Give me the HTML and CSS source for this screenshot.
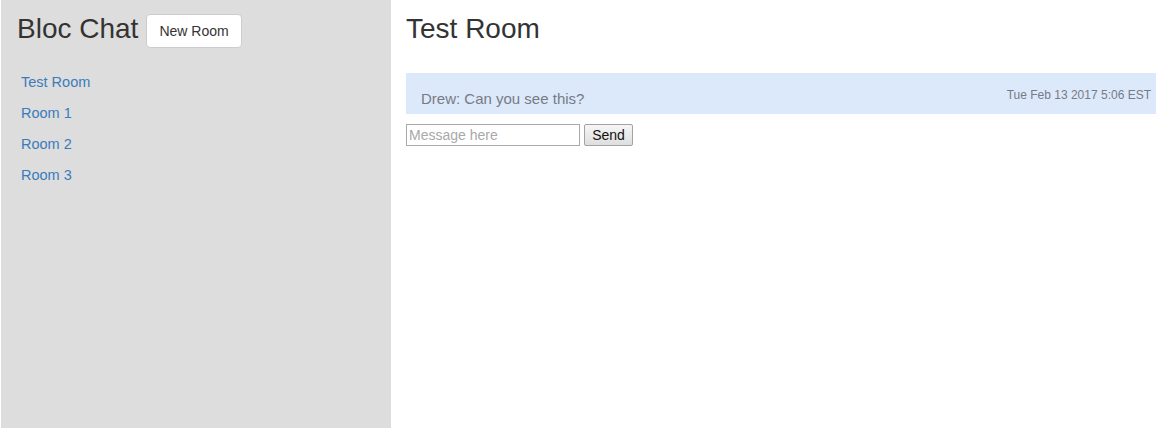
FILE: index.html
```html
<!DOCTYPE html>
<html>
<head>
<meta charset="utf-8">
<title>Bloc Chat</title>
<link rel="stylesheet" href="styles.css">
</head>
<body>
<div class="app">
  <aside class="sidebar">
    <div class="sidebar-header">
      <h1 class="brand">Bloc Chat</h1>
      <button class="btn-new">New Room</button>
    </div>
    <ul class="rooms">
      <li><a href="#">Test Room</a></li>
      <li><a href="#">Room 1</a></li>
      <li><a href="#">Room 2</a></li>
      <li><a href="#">Room 3</a></li>
    </ul>
  </aside>
  <main class="main">
    <h2 class="room-title">Test Room</h2>
    <div class="message">
      <span class="message-text">Drew: Can you see this?</span>
      <span class="message-time">Tue Feb 13 2017 5:06 EST</span>
    </div>
    <form class="composer">
      <input class="composer-input" type="text" placeholder="Message here">
      <button class="composer-send" type="button">Send</button>
    </form>
  </main>
</div>
</body>
</html>
```
FILE: styles.css
```css
html, body {
  margin: 0;
  padding: 0;
  height: 100%;
  background: #fff;
}
body {
  font-family: "Liberation Sans", Arial, sans-serif;
  font-size: 14px;
  color: #333;
}
.app {
  display: flex;
  height: 100%;
  padding-left: 1px;
  box-sizing: border-box;
}
.sidebar {
  width: 390px;
  flex: none;
  background: #dddddd;
  height: 100%;
}
.sidebar-header {
  display: flex;
  align-items: flex-start;
  padding: 13px 0 0 16px;
  gap: 8px;
}
.brand {
  margin: 0;
  font-size: 28px;
  font-weight: normal;
  line-height: 31px;
  color: #333;
}
.btn-new {
  margin-top: 1px;
  font-family: inherit;
  font-size: 14px;
  line-height: 20px;
  padding: 6px 12px;
  color: #333;
  background: #fff;
  border: 1px solid #ccc;
  border-radius: 4px;
}
.rooms {
  list-style: none;
  margin: 19px 0 0;
  padding: 0 0 0 20px;
}
.rooms li {
  padding: 5px 0;
  line-height: 21px;
}
.rooms a {
  font-size: 14.5px;
  color: #3a7cbb;
  text-decoration: none;
}
.main {
  flex: 1;
  padding: 13px 5px 0 15px;
}
.room-title {
  margin: 0;
  font-size: 28px;
  font-weight: normal;
  line-height: 31px;
  color: #333;
}
.message {
  margin-top: 29px;
  height: 41px;
  box-sizing: border-box;
  background: #dce9fb;
  display: flex;
  justify-content: space-between;
  align-items: flex-start;
  padding: 0 5px 0 15px;
}
.message-text {
  margin-top: 16px;
  font-size: 15px;
  line-height: 20px;
  color: #777b85;
}
.message-time {
  margin-top: 14px;
  font-size: 12px;
  line-height: 16px;
  color: #777b85;
}
.composer {
  display: flex;
  gap: 4px;
  margin: 10px 0 0;
}
.composer-input {
  width: 174px;
  height: 22px;
  box-sizing: border-box;
  border: 1px solid #a9a9a9;
  padding: 1px 2px;
  font-family: inherit;
  font-size: 14px;
  color: #333;
  outline: none;
}
.composer-input::placeholder {
  color: #a9a9a9;
}
.composer-send {
  width: 49px;
  height: 22px;
  box-sizing: border-box;
  padding: 0;
  font-family: inherit;
  font-size: 14px;
  color: #111;
  border: 1px solid #a3a3a3;
  border-radius: 2px;
  background: linear-gradient(#f6f6f6, #dedede);
}
```
